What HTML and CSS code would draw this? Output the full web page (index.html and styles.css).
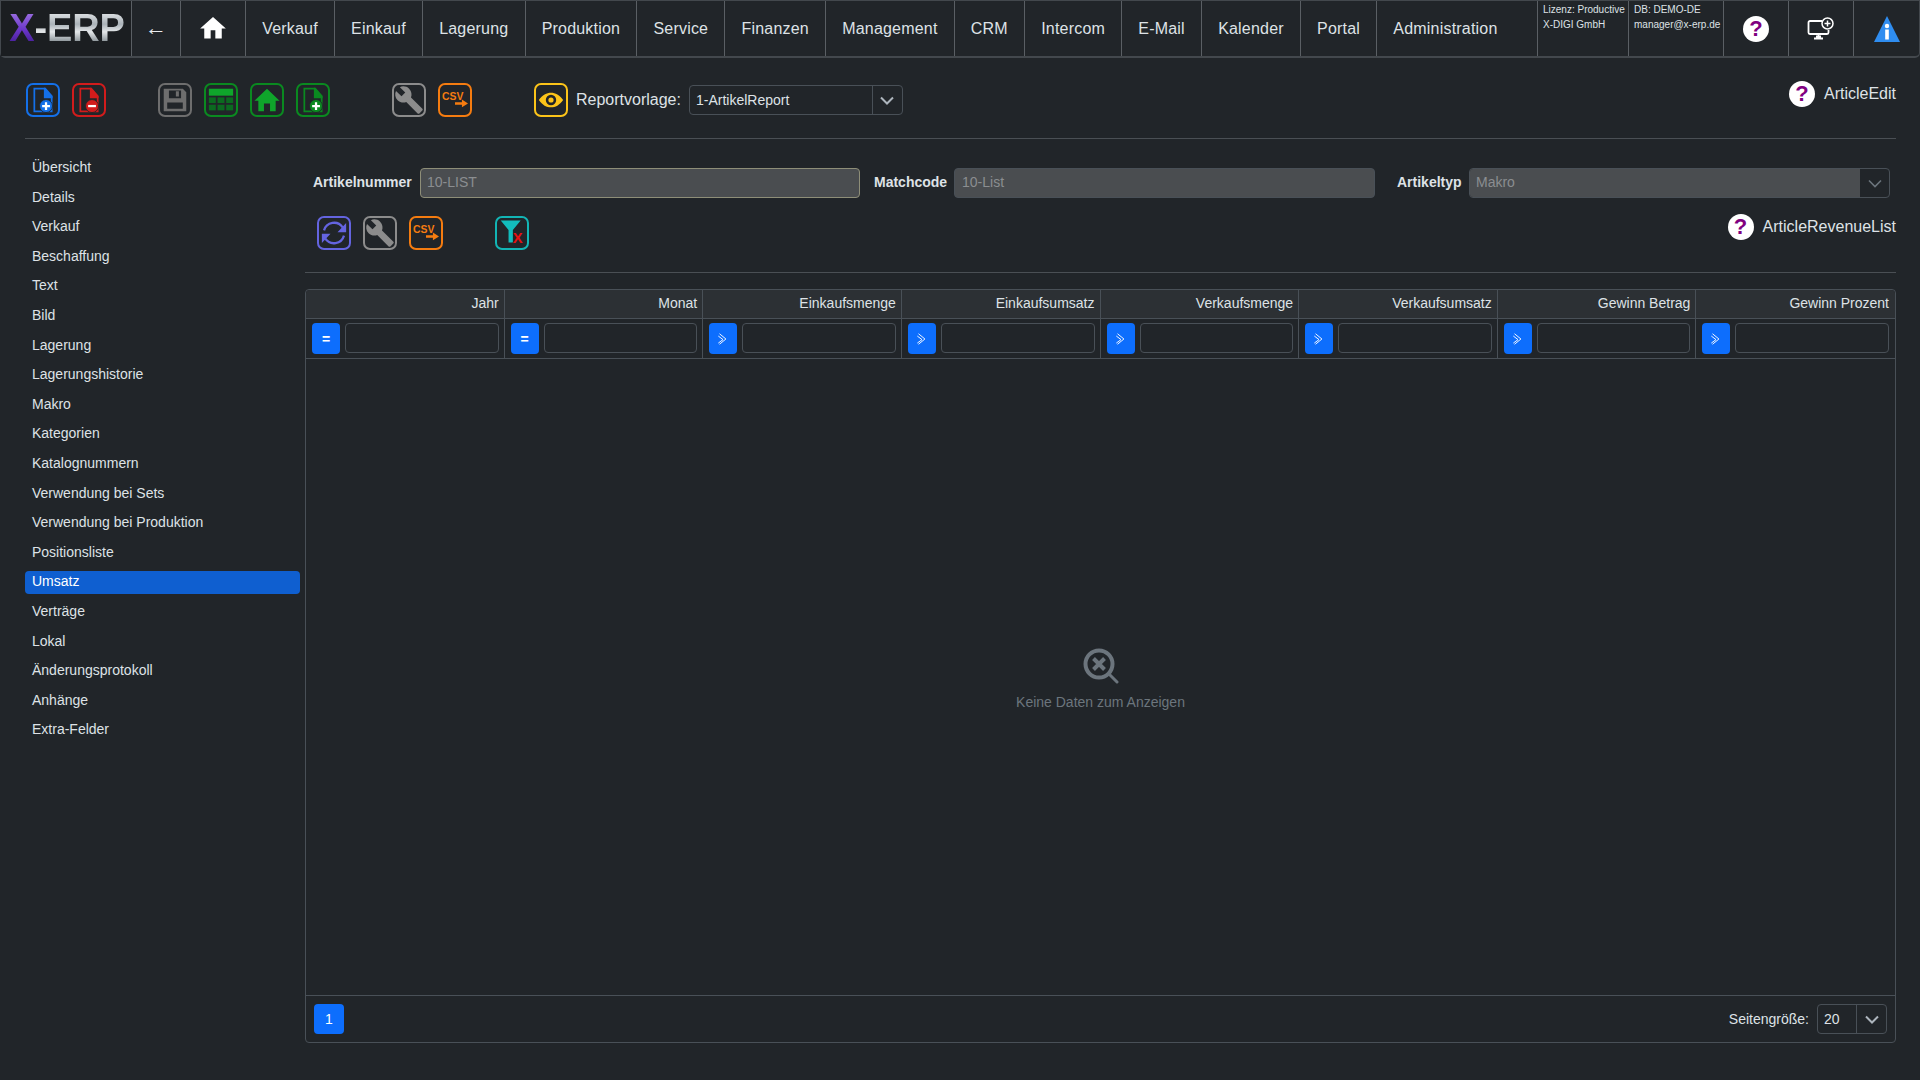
FILE: index.html
```html
<!DOCTYPE html>
<html lang="de">
<head>
<meta charset="utf-8">
<title>X-ERP</title>
<link rel="stylesheet" href="styles.css">
</head>
<body>
<div class="app">
  <nav class="topbar">
    <div class="logo"><span class="logo-x">X</span><span class="logo-rest">-ERP</span></div>
    <div class="nav-cell back">←</div>
    <div class="nav-cell home">
      <svg width="28" height="28" viewBox="0 0 24 24"><path fill="#fff" d="M10 21v-7h4v7h5.500v-8.500H23L12 2.500 1 12.500h3.500V21z"/></svg>
    </div>
    <a class="nav-item">Verkauf</a>
    <a class="nav-item">Einkauf</a>
    <a class="nav-item">Lagerung</a>
    <a class="nav-item">Produktion</a>
    <a class="nav-item">Service</a>
    <a class="nav-item">Finanzen</a>
    <a class="nav-item">Management</a>
    <a class="nav-item">CRM</a>
    <a class="nav-item">Intercom</a>
    <a class="nav-item">E-Mail</a>
    <a class="nav-item">Kalender</a>
    <a class="nav-item">Portal</a>
    <a class="nav-item nav-item-last">Administration</a>
    <div class="nav-spacer"></div>
    <div class="info info-a"><div>Lizenz: Productive</div><div>X-DIGI GmbH</div></div>
    <div class="info info-b"><div>DB: DEMO-DE</div><div>manager@x-erp.de</div></div>
    <div class="nav-cell tool"><span class="help">?</span></div>
    <div class="nav-cell tool">
      <svg width="28" height="24" viewBox="0 0 28 24" fill="none" stroke="#fff"><path stroke-width="1.800" d="M15 4H3a1.500 1.500 0 0 0-1.500 1.500v10A1.500 1.500 0 0 0 3 17h17a1.500 1.500 0 0 0 1.500-1.500V13"/><path stroke-width="1.800" d="M11.500 17v4M7 21.500h9M9 19.500h5"/><circle cx="20.500" cy="6.500" r="5.500" stroke-width="1.500"/><path stroke-width="1.500" d="M20.500 3.500v6M17.500 6.500h6"/></svg>
    </div>
    <div class="nav-cell tool last">
      <svg width="26" height="26" viewBox="0 0 26 26"><path fill="#2f8df0" d="M13 0l13 26H0z"/><circle cx="13" cy="10" r="2.200" fill="#fff"/><rect x="11.200" y="13.500" width="3.600" height="10" fill="#fff"/></svg>
    </div>
  </nav>

  <div class="toolbar">
    <span class="ico c-blue"><svg viewBox="0 0 30 30"><path class="doc" d="M5 2h12l8 9v17H5z"/><path class="fold" d="M16 1h2l8 9v3H16z"/><circle class="badge" cx="18.500" cy="22" r="7.500"/><path class="sign" d="M18.500 17.500v9M14 22h9"/></svg></span>
    <span class="ico c-red"><svg viewBox="0 0 30 30"><path class="doc" d="M5 2h12l8 9v17H5z"/><path class="fold" d="M16 1h2l8 9v3H16z"/><circle class="badge" cx="18.500" cy="22" r="7.500"/><path class="sign" d="M14 22h9"/></svg></span>
    <span class="ico c-gray gap-l">
      <svg viewBox="0 0 30 30"><path fill="currentColor" fill-rule="evenodd" d="M2 2h22l4 4v22H2zM8 4v9h14V4zM16 5h3.500v6H16zM6 18v7h18v-7z"/></svg>
    </span>
    <span class="ico c-green">
      <svg viewBox="0 0 30 30"><rect x="1" y="2" width="28" height="8" fill="#0fa52b"/><g fill="#0b6a20"><rect x="1" y="12" width="8" height="6.500"/><rect x="11" y="12" width="8" height="6.500"/><rect x="21" y="12" width="8" height="6.500"/><rect x="1" y="20.500" width="8" height="6.500"/><rect x="11" y="20.500" width="8" height="6.500"/><rect x="21" y="20.500" width="8" height="6.500"/></g></svg>
    </span>
    <span class="ico c-green">
      <svg viewBox="0 0 30 30"><path fill="#0fa52b" d="M11.500 28v-9h7v9h6.500V16h4.500L15 2 .5 16H5v12z"/></svg>
    </span>
    <span class="ico c-green"><svg viewBox="0 0 30 30"><path class="doc" d="M5 2h12l8 9v17H5z"/><path class="fold" d="M16 1h2l8 9v3H16z"/><circle class="badge" cx="18.500" cy="22" r="7.500"/><path class="sign" d="M18.500 17.500v9M14 22h9"/></svg></span>
    <span class="ico c-wrench gap-xl">
      <svg viewBox="0 0 24 24"><path fill="currentColor" d="M22.700 19l-9.100-9.100c.9-2.300.4-5-1.500-6.900-2-2-5-2.400-7.400-1.300L9 6 6 9 1.600 4.700C.4 7.100.9 10.100 2.900 12.100c1.900 1.900 4.600 2.400 6.900 1.500l9.100 9.100c.4.400 1 .4 1.400 0l2.300-2.300c.5-.4.5-1.100.1-1.400z"/></svg>
    </span>
    <span class="ico c-orange">
      <svg viewBox="0 0 30 30"><text x="0" y="15" class="csv">CSV</text><path fill="currentColor" d="M15 17.500h8v-3l7 4.500-7 4.500v-3h-8z"/></svg>
    </span>
    <span class="ico c-yellow gap-xl">
      <svg viewBox="0 0 30 30"><path fill="currentColor" fill-rule="evenodd" d="M1 15C5 9 10 6.500 15 6.500S25 9 29 15c-4 6-9 8.500-14 8.500S5 21 1 15zM15 9a6 6 0 1 0 0 12 6 6 0 0 0 0-12z"/><circle cx="15" cy="15" r="3" fill="currentColor"/></svg>
    </span>
    <label class="report-label">Reportvorlage:</label>
    <div class="select report-select">
      <span class="select-value">1-ArtikelReport</span>
      <span class="select-btn"><svg width="14" height="9" viewBox="0 0 14 9"><path d="M1 1.500l6 6 6-6" fill="none" stroke="#adb5bd" stroke-width="2"/></svg></span>
    </div>
    <div class="help-block top-help"><span class="help">?</span><span>ArticleEdit</span></div>
  </div>
  <div class="sep"></div>

  <div class="main">
    <ul class="side">
      <li>Übersicht</li>
      <li>Details</li>
      <li>Verkauf</li>
      <li>Beschaffung</li>
      <li>Text</li>
      <li>Bild</li>
      <li>Lagerung</li>
      <li>Lagerungshistorie</li>
      <li>Makro</li>
      <li>Kategorien</li>
      <li>Katalognummern</li>
      <li>Verwendung bei Sets</li>
      <li>Verwendung bei Produktion</li>
      <li>Positionsliste</li>
      <li class="active">Umsatz</li>
      <li>Verträge</li>
      <li>Lokal</li>
      <li>Änderungsprotokoll</li>
      <li>Anhänge</li>
      <li>Extra-Felder</li>
    </ul>

    <section class="content">
      <div class="form-row">
        <label class="f-label l1">Artikelnummer</label>
        <div class="field w1 focusy">10-LIST</div>
        <label class="f-label l2">Matchcode</label>
        <div class="field w2">10-List</div>
        <label class="f-label l3">Artikeltyp</label>
        <div class="combo w3">
          <div class="field combo-field">Makro</div>
          <span class="combo-btn"><svg width="14" height="9" viewBox="0 0 14 9"><path d="M1 1.500l6 6 6-6" fill="none" stroke="#6c757d" stroke-width="1.600"/></svg></span>
        </div>
      </div>

      <div class="sub-toolbar">
        <span class="ico c-violet">
          <svg viewBox="0 0 30 30" fill="none"><path stroke="currentColor" stroke-width="2.600" d="M3.500 12A12 12 0 0 1 25 8.500M26.500 18A12 12 0 0 1 5 21.500"/><path fill="currentColor" d="M29 3.500v10.500h-10zM1 26.500v-10.500h10z"/></svg>
        </span>
        <span class="ico c-wrench">
          <svg viewBox="0 0 24 24"><path fill="currentColor" d="M22.700 19l-9.100-9.100c.9-2.300.4-5-1.500-6.900-2-2-5-2.400-7.400-1.300L9 6 6 9 1.600 4.700C.4 7.100.9 10.100 2.900 12.100c1.900 1.900 4.600 2.400 6.900 1.500l9.100 9.100c.4.400 1 .4 1.400 0l2.300-2.300c.5-.4.5-1.100.1-1.400z"/></svg>
        </span>
        <span class="ico c-orange">
          <svg viewBox="0 0 30 30"><text x="0" y="15" class="csv">CSV</text><path fill="currentColor" d="M15 17.500h8v-3l7 4.500-7 4.500v-3h-8z"/></svg>
        </span>
        <span class="ico c-teal gap-m">
          <svg viewBox="0 0 30 30"><path fill="#12bcbc" d="M2 .5h23l-9 11V26h-5V11.500z"/><text x="16" y="27" class="xmark">X</text></svg>
        </span>
        <div class="help-block list-help"><span class="help">?</span><span>ArticleRevenueList</span></div>
      </div>
      <div class="sep sep-inner"></div>

      <div class="grid">
        <div class="g-head">
          <div class="hc">Jahr</div><div class="hc">Monat</div><div class="hc">Einkaufsmenge</div><div class="hc">Einkaufsumsatz</div><div class="hc">Verkaufsmenge</div><div class="hc">Verkaufsumsatz</div><div class="hc">Gewinn Betrag</div><div class="hc">Gewinn Prozent</div>
        </div>
        <div class="g-filter">
          <div class="fc"><span class="op">=</span><span class="fi"></span></div>
          <div class="fc"><span class="op">=</span><span class="fi"></span></div>
          <div class="fc"><span class="op"><svg class="gt" viewBox="0 0 12 12"><path d="M3 1.500L8.500 6 3 10.500M2 3.500L6 6.500 2 9.500"/></svg></span><span class="fi"></span></div>
          <div class="fc"><span class="op"><svg class="gt" viewBox="0 0 12 12"><path d="M3 1.500L8.500 6 3 10.500M2 3.500L6 6.500 2 9.500"/></svg></span><span class="fi"></span></div>
          <div class="fc"><span class="op"><svg class="gt" viewBox="0 0 12 12"><path d="M3 1.500L8.500 6 3 10.500M2 3.500L6 6.500 2 9.500"/></svg></span><span class="fi"></span></div>
          <div class="fc"><span class="op"><svg class="gt" viewBox="0 0 12 12"><path d="M3 1.500L8.500 6 3 10.500M2 3.500L6 6.500 2 9.500"/></svg></span><span class="fi"></span></div>
          <div class="fc"><span class="op"><svg class="gt" viewBox="0 0 12 12"><path d="M3 1.500L8.500 6 3 10.500M2 3.500L6 6.500 2 9.500"/></svg></span><span class="fi"></span></div>
          <div class="fc"><span class="op"><svg class="gt" viewBox="0 0 12 12"><path d="M3 1.500L8.500 6 3 10.500M2 3.500L6 6.500 2 9.500"/></svg></span><span class="fi"></span></div>
        </div>
        <div class="g-empty">
          <svg width="36" height="36" viewBox="0 0 36 36" fill="none" stroke="#6c757d"><circle cx="16" cy="16" r="13.500" stroke-width="4"/><path stroke-width="3" stroke-linecap="round" d="M26 26l8 8"/><path stroke-width="4" d="M10.500 10.500l11 11M21.500 10.500l-11 11"/></svg>
          <div class="empty-text">Keine Daten zum Anzeigen</div>
        </div>
        <div class="g-foot">
          <span class="page">1</span>
          <span class="size-label">Seitengröße:</span>
          <div class="select size-select">
            <span class="select-value">20</span>
            <span class="select-btn"><svg width="14" height="9" viewBox="0 0 14 9"><path d="M1 1.500l6 6 6-6" fill="none" stroke="#adb5bd" stroke-width="2"/></svg></span>
          </div>
        </div>
      </div>
    </section>
  </div>
</div>
</body>
</html>
```

FILE: styles.css
```css
* { box-sizing: border-box; }
html, body { margin: 0; height: 100%; overflow: hidden; }
body { background: #212529; color: #dee2e6; font-family: "Liberation Sans", Arial, sans-serif; font-size: 14px; }
.app { height: 100vh; display: flex; flex-direction: column; }

/* top navigation */
.topbar { height: 58px; flex: none; display: flex; align-items: stretch; border: 1px solid #43484d; border-width: 1px 1px 2px 1px; border-radius: 0 0 5px 5px; font-size: 16px; }
.logo { width: 131px; flex: none; display: flex; align-items: center; justify-content: center; padding-left: 2px; padding-bottom: 1px; font-size: 38px; font-weight: 700; line-height: 1; background: #1b1e21; border-right: 1px solid #5a5f64; letter-spacing: -.1px; }
.logo-x { background: linear-gradient(#a47be6, #6a35c8 55%, #3d1a8c); -webkit-background-clip: text; background-clip: text; color: transparent; }
.logo-rest { background: linear-gradient(#f0f2f3, #aab2b8 40%, #e4e7e9 60%, #8f979c 85%, #c9cdd0); -webkit-background-clip: text; background-clip: text; color: transparent; }
.nav-cell { display: flex; align-items: center; justify-content: center; border-right: 1px solid #5a5f64; flex: none; }
.back { width: 49px; font-size: 22px; color: #e9ecef; padding-bottom: 2px; }
.home { width: 65px; padding-bottom: 1px; }
.nav-item { display: flex; align-items: center; flex: none; padding: 0 16.15px; border-right: 1px solid #5a5f64; color: #dee2e6; letter-spacing: .2px; }
.nav-item-last { border-right: 0; }
.nav-spacer { flex: 1; border-right: 1px solid #5a5f64; }
.info { flex: none; padding: 1px 0 0 5px; font-size: 10px; line-height: 15px; border-right: 1px solid #5a5f64; white-space: nowrap; }
.info-a { width: 91px; }
.info-b { width: 95px; }
.tool { width: 65px; }
.tool.last { border-right: 0; }
.help { display: inline-flex; align-items: center; justify-content: center; width: 26px; height: 26px; flex: none; border-radius: 50%; background: #fff; color: #800080; font-weight: 700; font-size: 22px; line-height: 1; }

/* icon buttons */
.ico { width: 34px; height: 34px; flex: none; display: inline-flex; align-items: center; justify-content: center; border: 2px solid currentColor; border-radius: 7px; }
.ico svg { width: 26px; height: 26px; display: block; }
.ico.c-wrench svg { width: 30px; height: 30px; }
.c-blue { color: #1470e8; }
.c-red { color: #d21c1c; }
.c-gray { color: #6e6e6e; }
.c-green { color: #0a8a20; }
.c-wrench { color: #8c8c8c; }
.c-orange { color: #f57c10; }
.c-yellow { color: #fcc419; }
.c-violet { color: #6464e0; }
.c-teal { color: #12b5b5; }
.doc { fill: none; stroke: currentColor; stroke-width: 2; }
.fold { fill: currentColor; }
.badge { fill: currentColor; stroke: #212529; stroke-width: 1; }
.sign { stroke: #fff; stroke-width: 2.600; fill: none; }
.csv { font-family: "Liberation Sans", Arial, sans-serif; font-size: 12px; font-weight: 700; fill: currentColor; }
.xmark { font-family: "Liberation Sans", Arial, sans-serif; font-size: 17px; font-weight: 700; fill: #e81010; }

.toolbar { display: flex; align-items: center; gap: 12px; height: 34px; margin-top: 25px; padding: 0 24px 0 26px; flex: none; }
.gap-l { margin-left: 40px; }
.gap-xl { margin-left: 50px; }
.report-label { font-size: 16px; margin-left: -4px; margin-right: -4px; white-space: nowrap; }
.select { display: flex; align-items: stretch; border: 1px solid #495057; border-radius: 4px; font-size: 14px; }
.select-value { flex: 1; display: flex; align-items: center; padding-left: 6px; }
.select-btn { width: 30px; flex: none; display: flex; align-items: center; justify-content: center; border-left: 1px solid #495057; }
.report-select { width: 214px; height: 30px; }
.help-block { display: flex; align-items: center; gap: 9px; margin-left: auto; font-size: 16px; }
.top-help { margin-bottom: 12px; }
.list-help { margin-bottom: 12px; }
.sep { height: 1px; flex: none; background: #4a4f54; margin: 21px 24px 0 25px; }

/* main */
.main { flex: 1; min-height: 0; display: flex; }
.side { list-style: none; width: 275px; flex: none; margin: 18px 0 0 25px; padding: 0; display: flex; flex-direction: column; gap: 6.600px; }
.side li { height: 23px; line-height: 20px; padding-left: 7px; border-radius: 4px; white-space: nowrap; }
.side li.active { background: #0f5fd0; color: #fff; }

.content { flex: 1; min-width: 0; margin: 0 24px 37px 5px; display: flex; flex-direction: column; }
.form-row { display: flex; align-items: center; margin-top: 29px; height: 30px; padding-left: 8px; flex: none; }
.f-label { font-weight: 700; white-space: nowrap; flex: none; padding-bottom: 2px; }
.l1 { width: 107px; }
.l2 { width: 80px; margin-left: 14px; }
.l3 { width: 72px; margin-left: 22px; }
.field { height: 30px; background: #4a4d50; border: 1px solid #495057; border-radius: 4px; color: #8b8e91; display: flex; align-items: center; padding: 0 0 2px 6px; }
.w1 { width: 440px; flex: none; }
.w2 { width: 421px; flex: none; padding-left: 7px; }
.w3 { width: 421px; flex: none; }
.focusy { border-color: #8e8e78; }
.combo { display: flex; height: 30px; border: 1px solid #495057; border-radius: 4px; }
.combo-field { flex: 1; height: 28px; border: 0; border-radius: 3px 0 0 3px; padding-left: 6px; }
.combo-btn { width: 29px; flex: none; display: flex; align-items: center; justify-content: center; }

.sub-toolbar { display: flex; align-items: center; gap: 12px; margin-top: 18px; height: 34px; padding-left: 12px; flex: none; }
.gap-m { margin-left: 40px; }
.sep-inner { margin: 22px 0 0 0; }

/* grid */
.grid { flex: 1; min-height: 0; margin-top: 16px; border: 1px solid #495057; border-radius: 4px; display: flex; flex-direction: column; }
.g-head, .g-filter { display: grid; grid-template-columns: repeat(8, 1fr); flex: none; border-bottom: 1px solid #495057; }
.g-head { height: 29px; background: #2c3034; border-radius: 4px 4px 0 0; }
.hc { display: flex; align-items: center; justify-content: flex-end; padding: 0 5px 3px 6px; border-right: 1px solid #495057; }
.hc:last-child, .fc:last-child { border-right: 0; padding-right: 6px; }
.g-filter { height: 40px; }
.fc { display: flex; gap: 5px; padding: 4px 5px 4px 6px; border-right: 1px solid #495057; min-width: 0; }
.op { width: 28px; height: 31px; flex: none; display: flex; align-items: center; justify-content: center; background: #0d6efd; border-radius: 4px; color: #fff; font-weight: 700; }
.gt { width: 14px; height: 14px; fill: none; stroke: #fff; stroke-width: .8; }
.fi { flex: 1; min-width: 0; height: 30px; border: 1px solid #495057; border-radius: 4px; }
.g-empty { flex: 1; min-height: 0; display: flex; flex-direction: column; align-items: center; justify-content: center; padding-top: 6px; }
.empty-text { color: #6c757d; margin-top: 7.500px; line-height: 20px; }
.g-foot { height: 47px; flex: none; border-top: 1px solid #495057; display: flex; align-items: center; padding: 0 8px; }
.page { width: 30px; height: 30px; display: flex; align-items: center; justify-content: center; background: #0d6efd; color: #fff; border-radius: 4px; font-weight: 400; padding-bottom: 1px; }
.size-label { margin-left: auto; margin-right: 8px; padding-bottom: 1px; }
.size-select { width: 70px; height: 30px; }
```
